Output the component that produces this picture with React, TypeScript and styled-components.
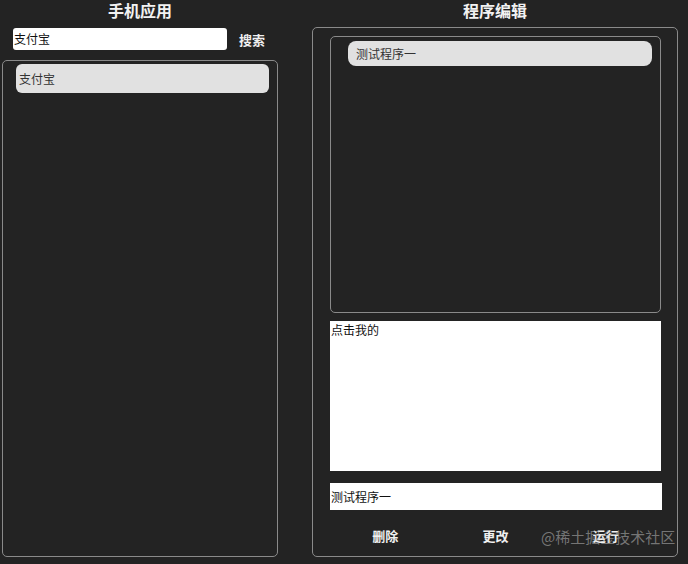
import React from "react";
import styled, { createGlobalStyle } from "styled-components";

const Global = createGlobalStyle`
  html, body { margin: 0; padding: 0; background: #232323; }
  body { font-family: "Noto Sans CJK SC", "Noto Sans", sans-serif; }
  * { box-sizing: border-box; }
`;

const Page = styled.div`
  width: 688px;
  height: 564px;
  display: flex;
  align-items: flex-start;
  background: #232323;
  position: relative;
  overflow: hidden;
`;

const Column = styled.div<{ $width: number; $left: number }>`
  width: ${(p) => p.$width}px;
  margin-left: ${(p) => p.$left}px;
  display: flex;
  flex-direction: column;
`;

const Title = styled.div`
  height: 20px;
  line-height: 20px;
  text-align: center;
  color: #f2f2f2;
  font-size: 16px;
  font-weight: 700;
`;

const SearchRow = styled.div`
  margin-top: 8px;
  height: 22px;
  display: flex;
  align-items: center;
  padding-left: 11px;
  gap: 12px;
`;

const SearchInput = styled.div`
  width: 214px;
  height: 22px;
  background: #fff;
  border-radius: 3px;
  font-size: 12px;
  line-height: 22px;
  color: #111;
  padding-left: 1px;
`;

const TextButton = styled.div`
  color: #f0f0f0;
  font-size: 13px;
  font-weight: 700;
  text-align: center;
`;

const Box = styled.div<{ $top: number; $height: number }>`
  margin-top: ${(p) => p.$top}px;
  height: ${(p) => p.$height}px;
  border: 1px solid #8a8a8a;
  border-radius: 5px;
  display: flex;
  flex-direction: column;
`;

const ListItem = styled.div<{ $ml: number; $mt: number; $h: number; $r: number; $pl: number }>`
  margin: ${(p) => p.$mt}px 8px 0 ${(p) => p.$ml}px;
  height: ${(p) => p.$h}px;
  border-radius: ${(p) => p.$r}px;
  background: #e1e1e1;
  color: #333;
  font-size: 12px;
  line-height: ${(p) => p.$h}px;
  padding-left: ${(p) => p.$pl}px;
`;

const EditorBody = styled.div`
  padding: 8px 16px 0 17px;
  display: flex;
  flex-direction: column;
  height: 100%;
`;

const InnerList = styled.div`
  height: 277px;
  border: 1px solid #8a8a8a;
  border-radius: 5px;
  display: flex;
  flex-direction: column;
`;

const CodeArea = styled.div`
  margin-top: 8px;
  height: 150px;
  background: #fff;
  color: #111;
  font-size: 12px;
  line-height: 16px;
  padding: 1px 1px;
`;

const NameInput = styled.div`
  margin-top: 12px;
  height: 27px;
  background: #fff;
  color: #111;
  font-size: 12px;
  line-height: 27px;
  padding-left: 1px;
  margin-right: -1px;
`;

const ButtonRow = styled.div`
  margin-top: 17px;
  display: grid;
  grid-template-columns: 1fr 1fr 1fr;
  line-height: 18px;
`;

const Watermark = styled.div`
  position: absolute;
  left: 541px;
  top: 527px;
  font-size: 15px;
  line-height: 20px;
  color: rgba(190, 190, 190, 0.55);
  font-family: "Noto Sans CJK SC", sans-serif;
  pointer-events: none;
  white-space: nowrap;
`;

export default function App() {
  return (
    <Page>
      <Global />
      <Column $width={276} $left={2}>
        <Title>手机应用</Title>
        <SearchRow>
          <SearchInput>支付宝</SearchInput>
          <TextButton>搜索</TextButton>
        </SearchRow>
        <Box $top={10} $height={497}>
          <ListItem $ml={13} $mt={3} $h={29} $r={6} $pl={3}>支付宝</ListItem>
        </Box>
      </Column>
      <Column $width={366} $left={34}>
        <Title>程序编辑</Title>
        <Box $top={7} $height={530}>
          <EditorBody>
            <InnerList>
              <ListItem $ml={17} $mt={4} $h={25} $r={8} $pl={8}>测试程序一</ListItem>
            </InnerList>
            <CodeArea>点击我的</CodeArea>
            <NameInput>测试程序一</NameInput>
            <ButtonRow>
              <TextButton>删除</TextButton>
              <TextButton>更改</TextButton>
              <TextButton>运行</TextButton>
            </ButtonRow>
          </EditorBody>
        </Box>
      </Column>
      <Watermark>@稀土掘金技术社区</Watermark>
    </Page>
  );
}
